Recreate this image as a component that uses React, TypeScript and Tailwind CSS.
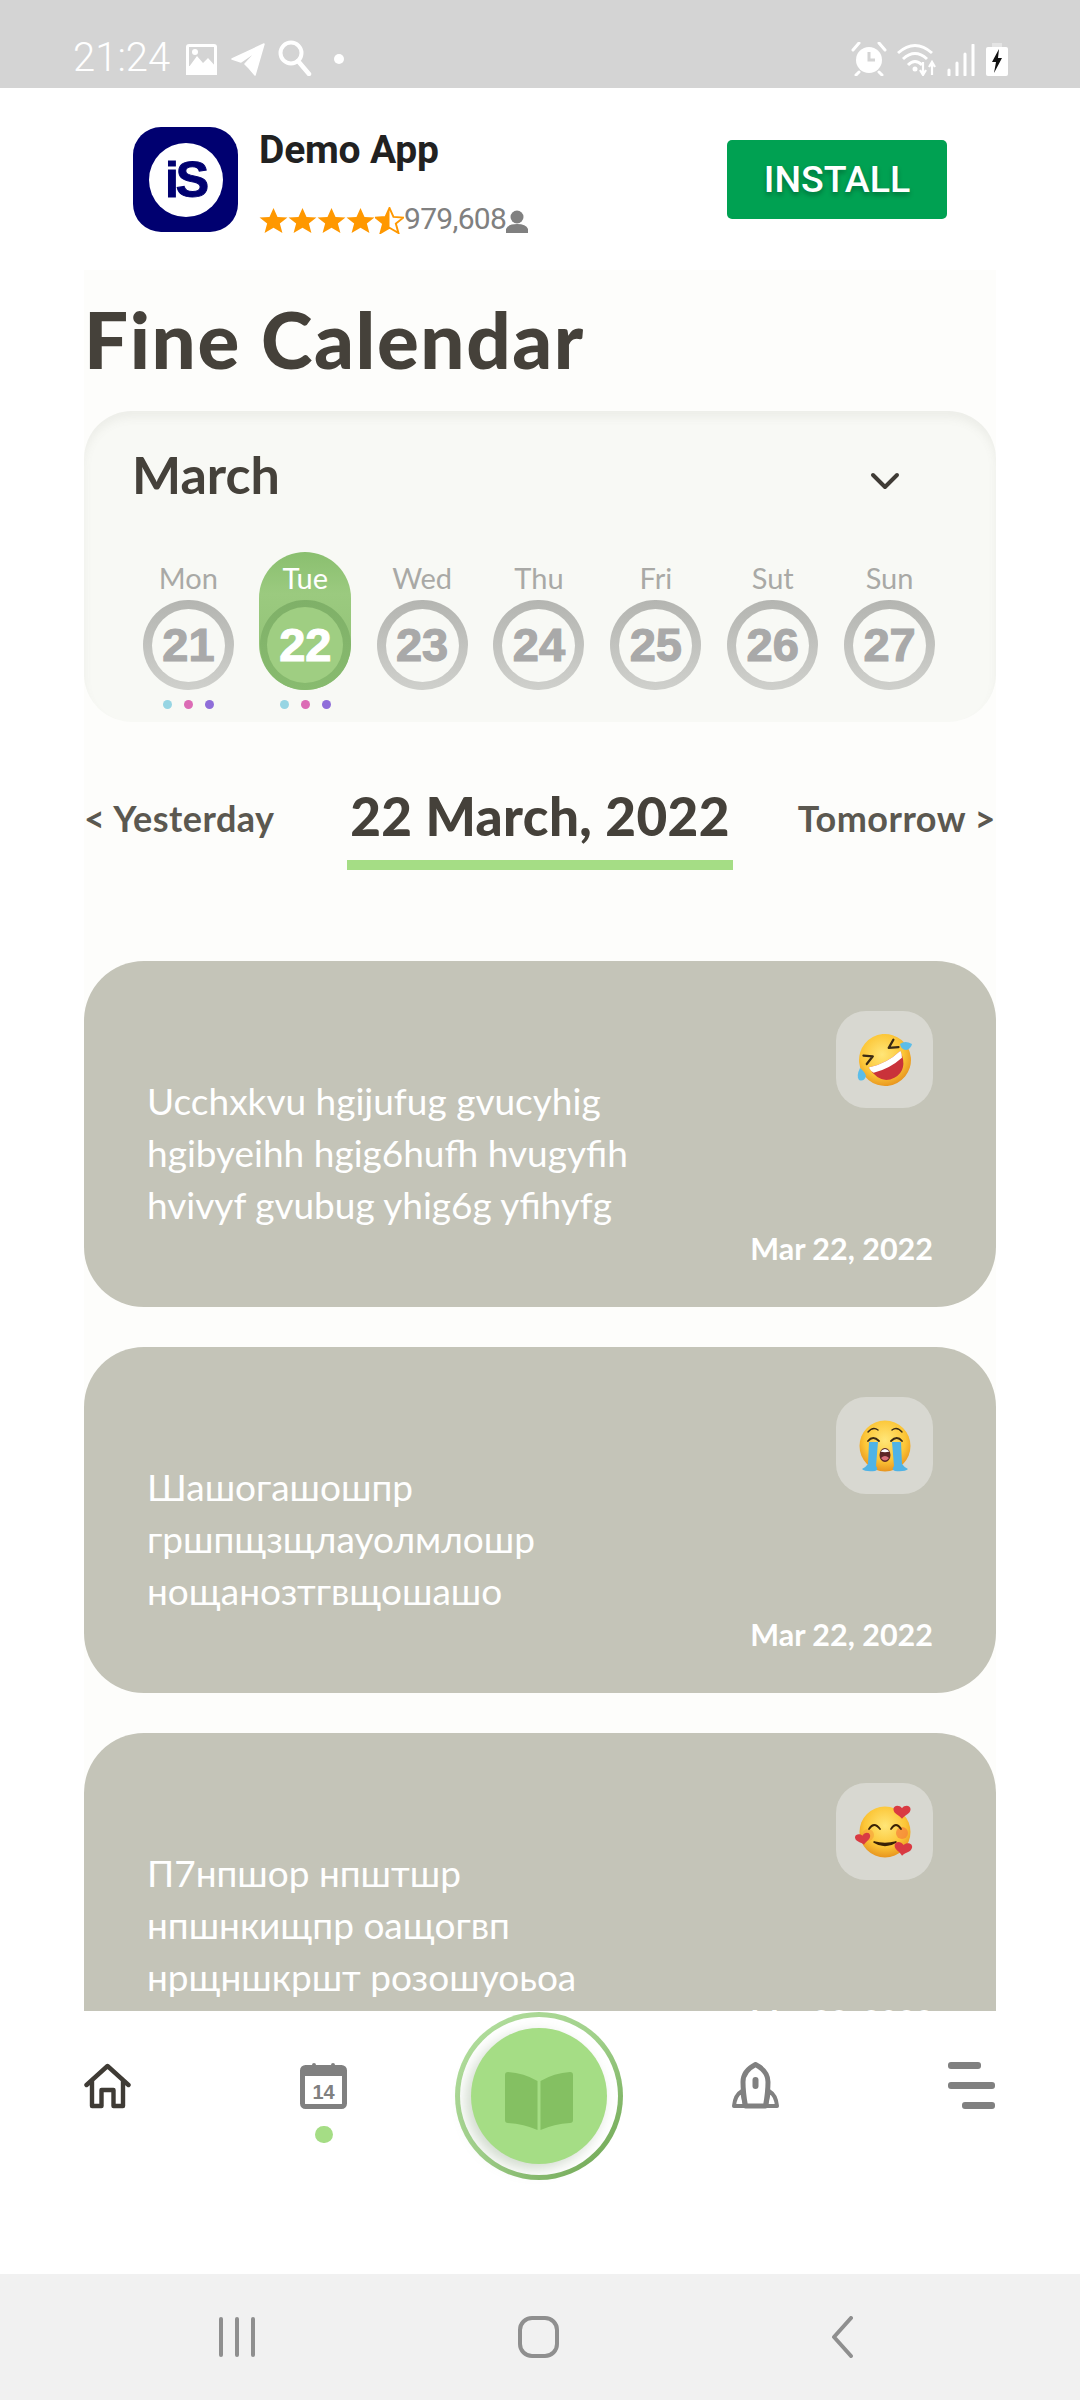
import { ReactNode } from 'react';

const days = [
  { name: 'Mon', num: 21, dots: true },
  { name: 'Tue', num: 22, dots: true, active: true },
  { name: 'Wed', num: 23 },
  { name: 'Thu', num: 24 },
  { name: 'Fri', num: 25 },
  { name: 'Sut', num: 26 },
  { name: 'Sun', num: 27 },
];

function FaceDefs({ id }: { id: string }) {
  return (
    <defs>
      <radialGradient id={id} cx="50%" cy="38%" r="62%">
        <stop offset="0%" stopColor="#ffe678" />
        <stop offset="65%" stopColor="#fcc637" />
        <stop offset="100%" stopColor="#e8951f" />
      </radialGradient>
    </defs>
  );
}

function RoflEmoji() {
  return (
    <svg width="60" height="60" viewBox="0 0 60 60">
      <FaceDefs id="rofl" />
      <g transform="rotate(-28 30 30)">
        <circle cx="30" cy="30" r="26" fill="url(#rofl)" />
        <path d="M12 25 L21 21 L13 16 M48 25 L39 21 L47 16" fill="none" stroke="#3a2a14" strokeWidth="2.2" strokeLinecap="round" strokeLinejoin="round" />
        <path d="M12 29 Q30 34 48 29 Q46 50 30 50 Q14 50 12 29Z" fill="#c9323a" />
        <path d="M12 29 Q30 34 48 29 Q48 33 46 36 Q30 40 14 36 Q12 33 12 29Z" fill="#fff" />
      </g>
      <path d="M5 38 Q1 46 4 50 Q9 52 11 46 Q10 42 5 38Z" fill="#5cbde8" />
      <path d="M57 14 Q50 10 45 14 Q46 20 52 20 Q56 18 57 14Z" fill="#5cbde8" />
    </svg>
  );
}

function CryEmoji() {
  return (
    <svg width="60" height="60" viewBox="0 0 60 60">
      <FaceDefs id="cry" />
      <g transform="translate(0 2)">
        <circle cx="30" cy="28" r="25.5" fill="url(#cry)" />
        <path d="M13 14 Q18 8 23 12 M37 12 Q42 8 47 14" fill="none" stroke="#3a2a14" strokeWidth="1.4" strokeLinecap="round" />
        <path d="M13 23 Q18 17 24 23 M36 23 Q42 17 47 23" fill="none" stroke="#3a2a14" strokeWidth="1.8" strokeLinecap="round" />
        <path d="M14 24 H23 L21 48 Q24 52 20 53 Q10 54 7 51 Q11 49 13 46Z" fill="#4fb3e6" />
        <path d="M37 24 H46 L47 46 Q49 49 53 51 Q50 54 40 53 Q36 52 39 48Z" fill="#4fb3e6" />
        <ellipse cx="30" cy="37" rx="5.5" ry="7" fill="#5c2626" />
        <path d="M25.5 33.5 Q30 28.5 34.5 33.5 Q30 35 25.5 33.5Z" fill="#fff" />
        <path d="M26 40 Q30 36 34 40 Q30 45 26 40Z" fill="#d9707a" />
      </g>
    </svg>
  );
}

function Heart({ x, y, r = 0, s = 1 }: { x: number; y: number; r?: number; s?: number }) {
  return (
    <path
      transform={`translate(${x} ${y}) rotate(${r}) scale(${s})`}
      d="M0 7 C-3 3 -9 2 -9 -3 C-9 -7 -3 -8 0 -4 C3 -8 9 -7 9 -3 C9 2 3 3 0 7Z"
      fill="#d93a42"
    />
  );
}

function LoveEmoji() {
  return (
    <svg width="60" height="60" viewBox="0 0 60 60">
      <FaceDefs id="love" />
      <circle cx="30" cy="30" r="25.5" fill="url(#love)" />
      <circle cx="13" cy="33" r="6" fill="#f59a3a" opacity="0.55" />
      <circle cx="47" cy="31" r="6" fill="#f5803a" opacity="0.7" />
      <path d="M14 27 Q19 19 25 27 M36 27 Q41 19 46 27" fill="none" stroke="#3a2206" strokeWidth="1.8" strokeLinecap="round" />
      <path d="M19 40 Q30 47 41 40 Q30 43 19 40Z" fill="#3a2206" stroke="#3a2206" strokeWidth="1.5" strokeLinejoin="round" />
      <Heart x={47} y={10} s={0.95} />
      <Heart x={8} y={37} r={-10} s={0.85} />
      <Heart x={48} y={47} r={8} s={0.98} />
    </svg>
  );
}

function Note({ text, emoji }: { text: string[]; emoji: ReactNode }) {
  return (
    <div className="flex h-[346px] shrink-0 justify-between rounded-[60px] bg-[#c4c4b8] pt-[50px] pr-[63px] pb-[41px] pl-[63px] text-white">
      <div className="pt-[64px] text-[37px] leading-[52px]">
        {text.map((line) => (
          <div key={line}>{line}</div>
        ))}
      </div>
      <div className="flex flex-col items-end justify-between">
        <div className="flex h-[97px] w-[97px] items-center justify-center rounded-[30px] bg-[#d8d8d1]">{emoji}</div>
        <div className="text-[30.5px] leading-9 font-bold">Mar 22, 2022</div>
      </div>
    </div>
  );
}

function Star({ half }: { half?: boolean }) {
  const d = 'M13 1 L16.6 10 L25.5 10.6 L18.7 16.6 L21 26 L13 20.8 L5 26 L7.3 16.6 L.5 10.6 L9.4 10Z';
  return (
    <svg width="29" height="27" viewBox="0 0 26 27" preserveAspectRatio="none">
      {half ? (
        <>
          <path d={d} fill="none" stroke="#ff9800" strokeWidth="1.8" />
          <path d="M13 1 L9.4 10 L.5 10.6 L7.3 16.6 L5 26 L13 20.8Z" fill="#ff9800" />
        </>
      ) : (
        <path d={d} fill="#ff9800" />
      )}
    </svg>
  );
}

function StatusBar() {
  return (
    <div className="relative flex h-[88px] shrink-0 items-end bg-[#d4d4d4] pb-[11px] pl-[73px] text-white">
      <span className="mr-[16px] text-[40px] leading-[38px] font-light [font-family:Roboto,sans-serif]">21:24</span>
      <svg width="31" height="31" viewBox="0 0 31 31" className="mr-[14px] mb-[2px]">
        <rect width="31" height="31" rx="3" fill="#fff" />
        <rect x="3" y="3" width="25" height="19" fill="#d4d4d4" />
        <path d="M0 27 L11 12 L17 19 L22 14 L31 24 V31 H0Z" fill="#fff" />
        <circle cx="9" cy="8" r="3" fill="#fff" />
      </svg>
      <svg width="34" height="33" viewBox="0 0 34 33" className="mr-[13px] mb-[1px]">
        <path d="M33 1 L24 32 L18 25 L14 21 L26 8 L10 19 L1 16Z" fill="#fff" stroke="#fff" strokeLinejoin="round" strokeWidth="1.5" />
      </svg>
      <svg width="34" height="36" viewBox="0 0 34 36" className="mb-[1px]">
        <circle cx="13" cy="13" r="10.5" fill="none" stroke="#fff" strokeWidth="4" />
        <path d="M20 21 L31 34" stroke="#fff" strokeWidth="4.5" strokeLinecap="round" />
      </svg>
      <span className="mb-[13px] ml-[22px] h-[10px] w-[10px] rounded-full bg-white" />
      <div className="ml-auto mr-[72px] flex items-end gap-[10px] pb-[1px]">
        <svg width="36" height="34" viewBox="0 0 36 34">
          <circle cx="18" cy="18" r="13" fill="#fff" />
          <path d="M18 10 V18 H24" fill="none" stroke="#d4d4d4" strokeWidth="3" />
          <path d="M2 8 L8 1 M34 8 L28 1 M8 30 L5 33 M28 30 L31 33" stroke="#fff" strokeWidth="3" strokeLinecap="round" />
        </svg>
        <svg width="40" height="34" viewBox="0 0 40 34">
          <path d="M1 11 Q18 -4 35 11 M6 17 Q18 6 30 17 M11 23 Q18 16 25 23" fill="none" stroke="#fff" strokeWidth="3" />
          <circle cx="18" cy="27" r="2.5" fill="#fff" />
          <path d="M26 20 V32 M23 28 L26 33 L29 28 M35 33 V21 M32 25 L35 20 L38 25" fill="none" stroke="#fff" strokeWidth="2.2" />
        </svg>
        <svg width="29" height="32" viewBox="0 0 29 32">
          <path d="M2 26 V31 M10 19 V31 M18 10 V31 M26 1 V31" stroke="#fff" strokeWidth="3" strokeLinecap="round" />
        </svg>
        <svg width="22" height="33" viewBox="0 0 22 33">
          <rect x="6" y="0" width="10" height="5" fill="#e4e4e4" />
          <rect x="0" y="4" width="22" height="29" rx="2" fill="#fff" />
          <path d="M13 6 L6 19 H10 L8 30 L16 15 H12Z" fill="#111" />
        </svg>
      </div>
    </div>
  );
}

function AdBanner() {
  return (
    <div className="flex h-[182px] shrink-0 items-start bg-white pt-[39px] pl-[133px] [font-family:Roboto,sans-serif]">
      <div className="flex h-[105px] w-[105px] items-center justify-center rounded-[28px] bg-[#000070]">
        <div className="flex h-[74px] w-[74px] items-center justify-center rounded-full bg-white text-[50px] leading-none font-black tracking-[-3px] text-[#000070] [-webkit-text-stroke:1px_currentColor] [font-family:'Liberation_Sans',sans-serif]">
          iS
        </div>
      </div>
      <div className="ml-[21px] flex w-[300px] flex-col">
        <div className="text-[39px] leading-[46px] font-bold tracking-[-0.2px] text-[#212121]">Demo App</div>
        <div className="mt-[31px] flex items-end">
          <Star />
          <Star />
          <Star />
          <Star />
          <Star half />
          <span className="text-[30px] leading-[30px] tracking-[-0.7px] text-[#808080]">979,608</span>
          <svg width="22" height="23" viewBox="0 0 22 23" className="mb-[1px]">
            <circle cx="11" cy="7" r="6.5" fill="#808080" />
            <path d="M0 23 V19 Q2 14 11 14 Q20 14 22 19 V23Z" fill="#808080" />
          </svg>
        </div>
      </div>
      <div className="mt-[13px] ml-[168px] flex h-[79px] w-[220px] items-center justify-center rounded-[5px] bg-[#00a152] text-[37.5px] font-medium text-white [text-shadow:0_3px_5px_rgba(0,0,0,0.3)]">
        INSTALL
      </div>
    </div>
  );
}

function DayCell({ name, num, active, dots }: { name: string; num: number; active?: boolean; dots?: boolean }) {
  return (
    <div className="flex flex-col items-center">
      <div
        className={`flex h-[138px] w-[92px] flex-col items-center rounded-full pt-[12px] ${
          active ? 'bg-gradient-to-b from-[#8abf6f] via-[#9bca7f] via-30% to-[#8fc074]' : ''
        }`}
      >
        <div className={`h-[36px] text-[29px] leading-[28px] ${active ? 'text-white' : 'text-[#a9a9a6]'}`}>{name}</div>
        <div
          className={`flex h-[90px] w-[91px] shrink-0 items-center justify-center rounded-full bg-gradient-to-b ${
            active ? 'from-[#7fb068] to-[#88bb6f]' : 'from-[#b4b5b1] to-[#cfd0cc]'
          }`}
        >
          <div
            className={`flex items-center justify-center rounded-full text-[47px] font-bold [-webkit-text-stroke:1.2px_currentColor] [font-family:'Liberation_Sans',sans-serif] ${
              active ? 'h-[76px] w-[76px] bg-[#9fce82] text-white' : 'h-[73px] w-[73px] bg-[#f8f9f5] text-[#a9a9a9]'
            }`}
          >
            {num}
          </div>
        </div>
      </div>
      <div className="mt-[10px] flex h-[9px] gap-[12px]">
        {dots && (
          <>
            <span className="h-[9px] w-[9px] rounded-full bg-[#97d5e3]" />
            <span className="h-[9px] w-[9px] rounded-full bg-[#dc6cb5]" />
            <span className="h-[9px] w-[9px] rounded-full bg-[#8f6ed9]" />
          </>
        )}
      </div>
    </div>
  );
}

function BottomNav() {
  return (
    <div className="flex h-[263px] shrink-0 items-start bg-white pl-[84px]">
      <svg width="47" height="46" viewBox="0 0 47 46" className="mt-[52px]">
        <path
          d="M2.5 22 L23.5 3 L44.5 22 M8 18 V43 H17.5 V27 H29.5 V43 H39 V18"
          fill="none"
          stroke="#3f3b35"
          strokeWidth="4.4"
          strokeLinecap="round"
          strokeLinejoin="round"
        />
      </svg>
      <div className="mt-[52px] ml-[169px] flex w-[47px] flex-col items-center">
        <svg width="47" height="46" viewBox="0 0 47 46">
          <rect x="2.5" y="4.5" width="42" height="39" rx="3" fill="#fff" stroke="#808080" strokeWidth="5" />
          <rect x="2" y="5" width="43" height="8" fill="#808080" />
          <path d="M14 2 V9 M33 2 V9" stroke="#808080" strokeWidth="4" strokeLinecap="round" />
          <text x="23.5" y="36" textAnchor="middle" fontSize="20" fontWeight="700" fill="#808080" fontFamily="Liberation Sans, sans-serif">
            14
          </text>
        </svg>
        <span className="mt-[17px] h-[17px] w-[18px] rounded-full bg-[#a5dd85]" />
      </div>
      <div className="mt-[1px] ml-[108px] flex h-[168px] w-[168px] items-center justify-center rounded-full bg-gradient-to-br from-[#b5e0a0] via-[#a0d08a] to-[#6aa24d]">
        <div className="flex h-[158px] w-[158px] items-center justify-center rounded-full bg-white">
          <div className="flex h-[136px] w-[136px] items-center justify-center rounded-full bg-[#a5dd85] shadow-[-5px_5px_14px_rgba(120,150,110,0.35)]">
            <svg width="70" height="60" viewBox="0 0 70 60" className="mt-[10px]">
              <path
                d="M33.5 10 Q20 2 4 1 Q1 1 1 4 V49 Q1 52 4 52 Q20 53 33.5 59Z M36.5 10 Q50 2 66 1 Q69 1 69 4 V49 Q69 52 66 52 Q50 53 36.5 59Z"
                fill="#84c062"
              />
            </svg>
          </div>
        </div>
      </div>
      <svg width="47" height="47" viewBox="0 0 47 47" className="mt-[51px] ml-[109px]">
        <path
          d="M23.5 2.5 Q36 9 36 20 Q36 30 33.5 44 H13.5 Q11 30 11 20 Q11 9 23.5 2.5Z"
          fill="none"
          stroke="#808080"
          strokeWidth="5"
          strokeLinejoin="round"
        />
        <rect x="20.5" y="15" width="6" height="12" rx="3" fill="#808080" />
        <path d="M10 29 Q3 33 2 44 H13Z M37 29 Q44 33 45 44 H34Z" fill="none" stroke="#808080" strokeWidth="4" strokeLinejoin="round" />
      </svg>
      <div className="mt-[51px] ml-[169px] flex w-[47px] flex-col gap-[13px]">
        <span className="h-[7px] w-[33px] rounded-[3px] bg-[#808080]" />
        <span className="h-[7px] w-[47px] rounded-[3px] bg-[#808080]" />
        <span className="ml-[14px] h-[7px] w-[33px] rounded-[3px] bg-[#808080]" />
      </div>
    </div>
  );
}

function SystemNav() {
  return (
    <div className="flex h-[126px] shrink-0 items-start bg-[#f1f1f1] pt-[42px] pl-[219px]">
      <div className="mt-[1px] flex gap-[12px]">
        <span className="h-[40px] w-[4px] rounded-full bg-[#8f8f8f]" />
        <span className="h-[40px] w-[4px] rounded-full bg-[#8f8f8f]" />
        <span className="h-[40px] w-[4px] rounded-full bg-[#8f8f8f]" />
      </div>
      <div className="ml-[263px] h-[42px] w-[41px] rounded-[14px] border-[4px] border-[#8f8f8f]" />
      <svg width="22" height="42" viewBox="0 0 22 42" className="ml-[272px]">
        <path d="M20 2 L3 21 L20 40" fill="none" stroke="#8f8f8f" strokeWidth="4" strokeLinecap="round" strokeLinejoin="round" />
      </svg>
    </div>
  );
}

export default function App() {
  return (
    <div className="flex h-[2400px] w-[1080px] flex-col overflow-hidden bg-white [font-family:Lato,'Noto_Sans',sans-serif]">
      <StatusBar />
      <AdBanner />

      <div className="mx-[84px] flex min-h-0 flex-1 flex-col overflow-hidden bg-[#fdfdfb]">
        <div className="flex h-[141px] shrink-0 items-center pb-[4px] text-[78px] leading-none font-black tracking-[1.6px] text-[#45413a]">
          Fine Calendar
        </div>

        <div className="h-[311px] shrink-0 rounded-[48px] bg-[#f8f9f5] shadow-[inset_0_7px_8px_rgba(120,120,100,0.08)]">
          <div className="flex h-[141px] items-start justify-between pt-[33px] pr-[96px] pl-[48px]">
            <span className="text-[52px] leading-[60px] font-bold text-[#45413a]">March</span>
            <svg width="30" height="18" viewBox="0 0 30 18" className="mt-[28px]">
              <path d="M3 3 L15 15 L27 3" fill="none" stroke="#3f3b35" strokeWidth="4" strokeLinecap="round" strokeLinejoin="round" />
            </svg>
          </div>
          <div className="ml-[46px] grid w-[818px] grid-cols-7">
            {days.map((d) => (
              <DayCell key={d.num} {...d} />
            ))}
          </div>
        </div>

        <div className="mt-[56px] flex shrink-0 items-start text-[36px] font-bold tracking-[0.5px] text-[#5b5850]">
          <span className="mt-[20px] flex-1 leading-[40px]">&lt; Yesterday</span>
          <div className="flex w-[386px] flex-col items-center">
            <span className="text-[53px] leading-[76px] font-black tracking-[0.4px] whitespace-nowrap text-[#45413a]">22 March, 2022</span>
            <span className="mt-[6px] h-[10px] w-full bg-[#a5dd85]" />
          </div>
          <span className="mt-[20px] flex-1 text-right leading-[40px]">Tomorrow &gt;</span>
        </div>

        <div className="mt-[91px] flex flex-col gap-[40px]">
          <Note text={['Ucchxkvu hgijufug gvucyhig', 'hgibyeihh hgig6hufh hvugyfih', 'hvivyf gvubug yhig6g yfihyfg']} emoji={<RoflEmoji />} />
          <Note text={['Шашогашошпр', 'гршпщзщлауолмлошр', 'нощанозтгвщошашо']} emoji={<CryEmoji />} />
          <Note text={['П7нпшор нпштшр', 'нпшнкищпр оащогвп', 'нрщншкршт розошуоьоа']} emoji={<LoveEmoji />} />
        </div>
      </div>

      <BottomNav />
      <SystemNav />
    </div>
  );
}
